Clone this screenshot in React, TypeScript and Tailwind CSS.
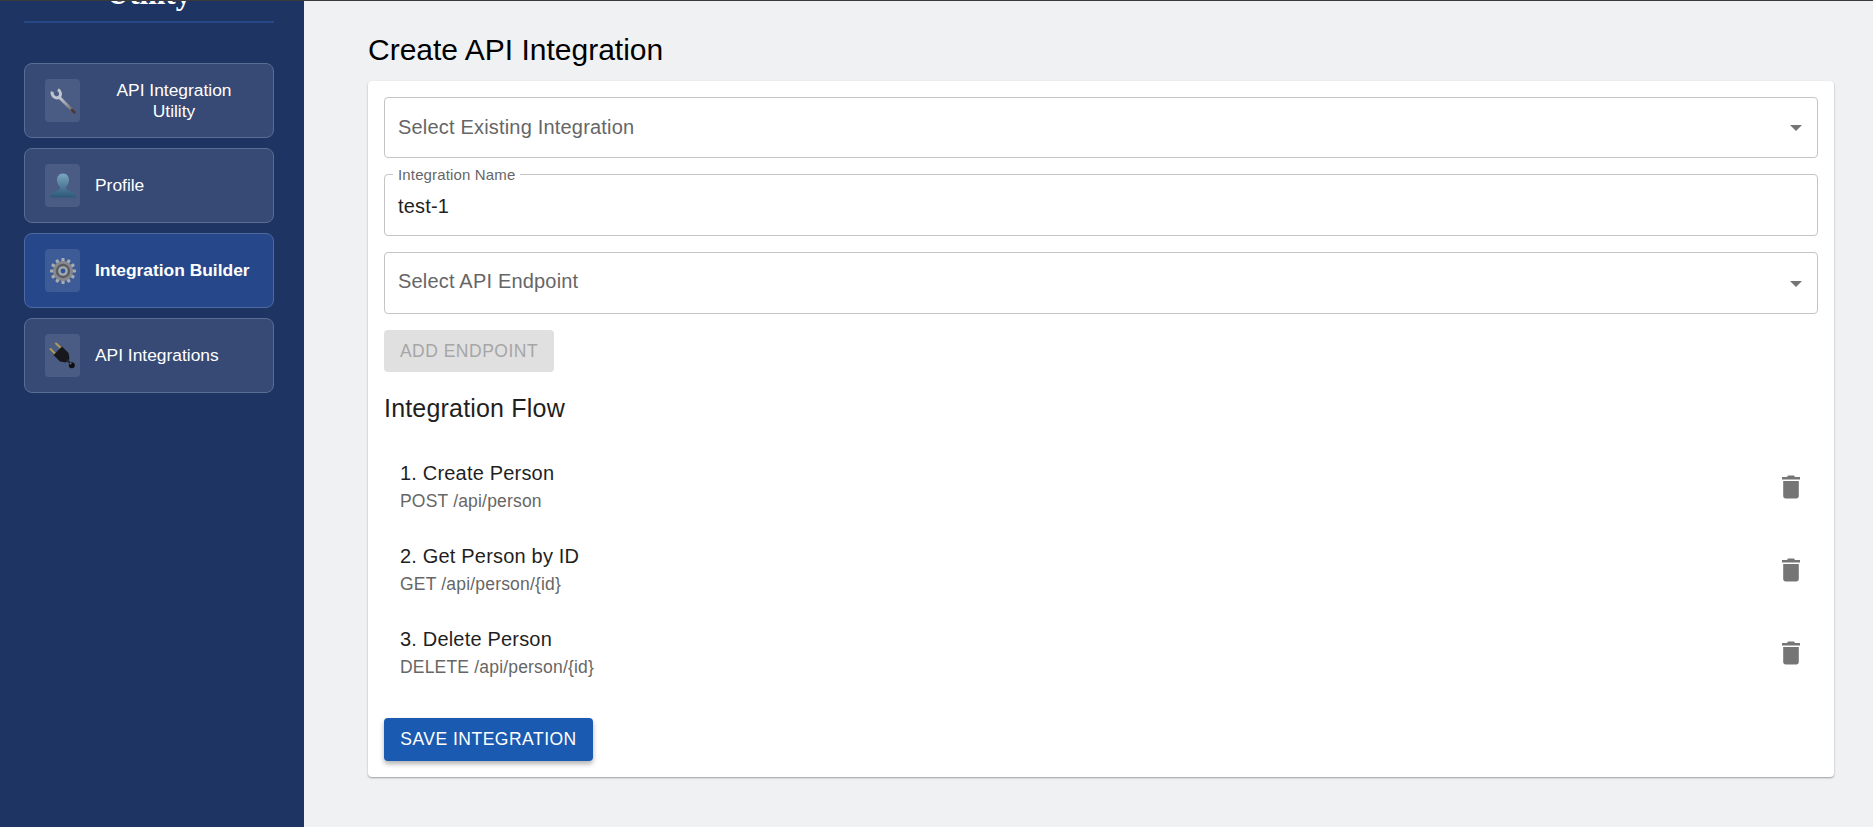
import React from "react";

const font = { fontFamily: '"Liberation Sans", Arial, sans-serif' };

function Wrench() {
  return (
    <svg width="28" height="28" viewBox="0 0 28 28">
      <defs>
        <linearGradient id="wr" x1="0" y1="0" x2="1" y2="1">
          <stop offset="0" stopColor="#c9ced6" />
          <stop offset="0.6" stopColor="#8d8f96" />
          <stop offset="1" stopColor="#5e4a4a" />
        </linearGradient>
      </defs>
      <path d="M10 10 L25 25" stroke="url(#wr)" strokeWidth="3" strokeLinecap="round" />
      <path d="M3.2 4.6 C2.4 8.5 6 11.8 10 10.6 C12.4 8 12 4.6 9 2.6" fill="none" stroke="#bfc5cf" strokeWidth="3" />
      <path d="M23 23 L25.5 25.5" stroke="#46353a" strokeWidth="2.4" strokeLinecap="round" />
    </svg>
  );
}

function Person() {
  return (
    <svg width="28" height="28" viewBox="0 0 28 28">
      <defs>
        <linearGradient id="pr" x1="0" y1="0" x2="0" y2="1">
          <stop offset="0" stopColor="#7ba6c0" />
          <stop offset="1" stopColor="#2d5878" />
        </linearGradient>
      </defs>
      <path
        d="M14 1.5 C10.2 1.5 8 4.4 8 8 C8 11 9.4 13.6 11 15 L11 17.2 C8 19 3.2 19.4 1.4 23 L1.4 25.4 L26.6 25.4 L26.6 23 C24.8 19.4 20 19 17 17.2 L17 15 C18.6 13.6 20 11 20 8 C20 4.4 17.8 1.5 14 1.5 Z"
        fill="url(#pr)"
      />
    </svg>
  );
}

function Gear() {
  const teeth = Array.from({ length: 12 }, (_, i) => i * 30);
  return (
    <svg width="28" height="28" viewBox="0 0 28 28">
      {teeth.map((a) => (
        <rect key={a} x="12.4" y="1" width="3.2" height="5" rx="0.8" fill="#a8abb0" transform={`rotate(${a} 14 14)`} />
      ))}
      <circle cx="14" cy="14" r="10" fill="#85888d" />
      <circle cx="14" cy="14" r="7.2" fill="#5a5c62" />
      <circle cx="14" cy="14" r="4.8" fill="#a4a8ae" />
      <circle cx="14" cy="14" r="2.4" fill="#2f5595" />
    </svg>
  );
}

function Plug() {
  return (
    <svg width="28" height="28" viewBox="0 0 28 28">
      <path d="M7 1.5 L14 8" stroke="#b09a4e" strokeWidth="2" strokeLinecap="round" />
      <path d="M1.5 7 L8 13.5" stroke="#b09a4e" strokeWidth="2" strokeLinecap="round" />
      <path d="M13 4.5 L19.5 11 L20.5 17 L17 20.5 L11 19.5 L4.5 13 Z" fill="#17181c" />
      <path d="M18.5 17 L22 20.5 L20.5 22 L17 18.5 Z" fill="#24262b" />
      <circle cx="22.8" cy="23.2" r="3" fill="#0e0f12" />
      <circle cx="21.5" cy="21.5" r="1" fill="#6a6d75" />
    </svg>
  );
}

function NavItem({
  icon,
  label,
  active,
  center,
}: {
  icon: React.ReactNode;
  label: string;
  active?: boolean;
  center?: boolean;
}) {
  return (
    <div
      className={`flex h-[75px] w-[250px] items-center rounded-[8px] border pl-[20px] pr-[20px] text-[17.4px] leading-[21px] text-white ${
        active ? "border-[#4d6a9f] bg-[#26488a] font-bold" : "border-[#5a6d93] bg-[#374975]"
      }`}
    >
      <div className={`flex h-[43px] w-[35px] shrink-0 items-center justify-center rounded-[4px] ${active ? "bg-[#3d5b97]" : "bg-[#4b5c84]"}`}>
        {icon}
      </div>
      <span className={center ? "flex-1 pl-[15px] text-center" : "pl-[15px]"}>{label}</span>
    </div>
  );
}

function SelectBox({ label, tall }: { label: string; tall?: boolean }) {
  return (
    <div className={`flex items-center justify-between rounded-[4px] border border-[#c4c4c4] pl-[13px] pr-[15px] text-[20px] tracking-[0.1875px] text-[#666666] ${tall ? "h-[62px]" : "h-[61px]"}`}>
      <span className={tall ? "-mt-[5px]" : "-mt-[2px]"}>{label}</span>
      <svg width="12" height="6" viewBox="0 0 12 6" className="mt-[1px]">
        <path d="M0 0 L12 0 L6 6 Z" fill="#757575" />
      </svg>
    </div>
  );
}

function Trash() {
  return (
    <svg width="18" height="24" viewBox="0 0 18 24" className="mt-[1px]">
      <path d="M6 0.5 L12 0.5 L13 2 L18 2 L18 4.5 L0 4.5 L0 2 L5 2 Z" fill="#757575" />
      <path d="M1.2 6 L16.8 6 L16.8 21 C16.8 22.6 15.6 23.5 14.4 23.5 L3.6 23.5 C2.4 23.5 1.2 22.6 1.2 21 Z" fill="#757575" />
    </svg>
  );
}

function FlowItem({ title, sub }: { title: string; sub: string }) {
  return (
    <div className="flex h-[83px] items-center justify-between pl-[16px] pr-[18px] pt-[1px]">
      <div>
        <div className="text-[20px] leading-[29px] tracking-[0.1875px] text-[#1f1f1f]">{title}</div>
        <div className="mt-[1px] text-[17.5px] leading-[24px] tracking-[0.1875px] text-[#666666]">{sub}</div>
      </div>
      <Trash />
    </div>
  );
}

export default function App() {
  return (
    <div className="flex h-[827px] w-[1873px] overflow-hidden bg-[#f0f1f3]" style={font}>
      <aside className="h-full w-[304px] shrink-0 overflow-hidden border-t border-[#3a3a3a] bg-[#1e3564] pl-[24px]">
        <div className="-mt-[25px] h-[47px] w-[250px] border-b-2 border-[#274887] text-center text-[31px] font-bold leading-[36px] text-white" style={{ fontFamily: '"Liberation Serif", serif' }}>
          Utility
        </div>
        <nav className="mt-[40px] flex flex-col gap-[10px]">
          <NavItem icon={<Wrench />} label="API Integration Utility" center />
          <NavItem icon={<Person />} label="Profile" />
          <NavItem icon={<Gear />} label="Integration Builder" active />
          <NavItem icon={<Plug />} label="API Integrations" />
        </nav>
      </aside>
      <main className="min-w-0 flex-1 border-t border-[#3a3a3a] pl-[64px] pr-[39px]">
        <h1 className="mt-[30px] h-[50px] text-[30px] leading-[38px] text-black">Create API Integration</h1>
        <section className="flex h-[696px] flex-col rounded-[4px] bg-white p-[16px] shadow-[0_1px_2px_rgba(0,0,0,0.35)]">
          <SelectBox label="Select Existing Integration" />
          <div className="relative mt-[16px] flex h-[62px] items-center rounded-[4px] border border-[#c4c4c4] pl-[13px] text-[20px] tracking-[0.1875px] text-[#1f1f1f]">
            <span className="absolute -top-[8px] left-[8px] bg-white px-[5px] text-[15px] leading-[16px] tracking-[0.15px] text-[#666666]">Integration Name</span>
            <span className="mt-[1px]">test-1</span>
          </div>
          <div className="mt-[16px]">
            <SelectBox label="Select API Endpoint" tall />
          </div>
          <div className="mt-[16px] flex h-[42px] w-[170px] items-center justify-center rounded-[4px] bg-[#e0e0e0] text-[17.5px] tracking-[0.5px] text-[#a6a6a6]">
            ADD ENDPOINT
          </div>
          <h2 className="mt-[18px] h-[40px] text-[25px] leading-[36px] tracking-[0.1875px] text-[#1f1f1f]">Integration Flow</h2>
          <div className="mt-[14px] flex flex-col">
            <FlowItem title="1. Create Person" sub="POST /api/person" />
            <FlowItem title="2. Get Person by ID" sub="GET /api/person/{id}" />
            <FlowItem title="3. Delete Person" sub="DELETE /api/person/{id}" />
          </div>
          <div className="mt-[25px] flex h-[43px] w-[209px] items-center justify-center rounded-[4px] bg-[#1a5ab0] text-[17.5px] tracking-[0.5px] text-white shadow-[0_3px_5px_rgba(0,0,0,0.3)]">
            SAVE INTEGRATION
          </div>
        </section>
      </main>
    </div>
  );
}
